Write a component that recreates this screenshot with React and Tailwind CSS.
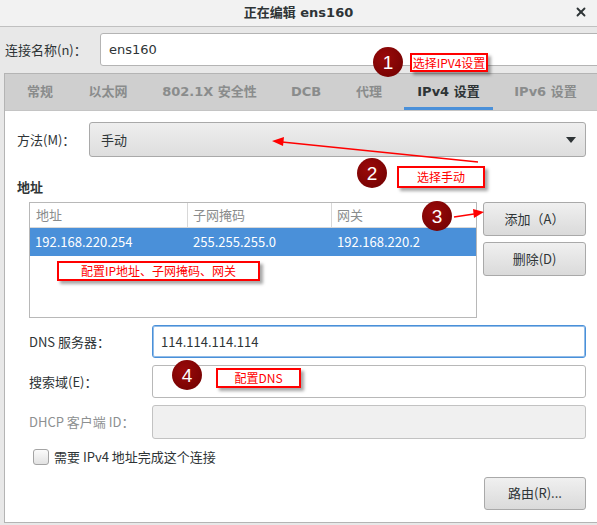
import { X } from 'lucide-react'

const ui = { fontFamily: '"Noto Sans CJK SC", "Noto Sans", sans-serif' }
const bold = { fontFamily: '"DejaVu Sans", "Noto Sans CJK SC", sans-serif' }

const tabs = [
  { label: '常规', w: 'w-[70px]' },
  { label: '以太网', w: 'w-[66px]' },
  { label: '802.1X 安全性', w: 'w-[137px]' },
  { label: 'DCB', w: 'w-[56px]' },
  { label: '代理', w: 'w-[70px]' },
  { label: 'IPv4 设置', w: 'w-[89px]', active: true },
  { label: 'IPv6 设置', w: 'w-[105px]' },
]

function Badge({ n, className }) {
  return (
    <div
      className={`absolute w-[30px] h-[30px] rounded-full flex items-center justify-center text-white text-[19px] leading-none bg-[radial-gradient(circle_at_40%_35%,#9a0a0a,#6e0000)] ${className}`}
      style={{ fontFamily: '"Liberation Sans", Arial, sans-serif' }}
    >
      {n}
    </div>
  )
}

function Note({ children, className }) {
  return (
    <div
      className={`absolute bg-white border-2 border-[#ff0000] text-[#ff0000] text-[12px] leading-none flex items-center justify-center shadow-[3px_3px_3px_rgba(0,0,0,0.35)] ${className}`}
      style={ui}
    >
      {children}
    </div>
  )
}

function Btn({ children, className = '' }) {
  return (
    <div className={`flex items-center justify-center rounded-[3px] border border-[#a9a9a9] bg-gradient-to-b from-[#f0f0f0] to-[#dadada] text-[13px] text-[#2e3436] ${className}`}>
      {children}
    </div>
  )
}

function Field({ label, children, dim }) {
  return (
    <div className="flex items-center pl-[12px] mt-[7px]">
      <div className={`w-[123px] text-[13px] ${dim ? 'text-[#8d9091]' : 'text-[#2e3436]'}`}>{label}</div>
      {children}
    </div>
  )
}

export default function App() {
  return (
    <div className="relative w-[597px] h-[525px] overflow-hidden bg-[#e8e8e8]" style={ui}>
      {/* title bar */}
      <div className="relative h-[27px] bg-[#f2f2f2] border-b border-[#c0c0c0] flex items-center justify-center">
        <span className="text-[13px] font-bold text-[#2e3436]" style={bold}>正在编辑 ens160</span>
        <X className="absolute right-[9px] top-[5px] w-[14px] h-[14px] text-[#2e3436]" strokeWidth={3.2} />
      </div>

      {/* connection name */}
      <div className="flex items-center pt-[6px]">
        <div className="w-[100px] pl-[5px] text-[13px] text-[#2e3436]">连接名称(n)：</div>
        <div className="flex-1 mr-[-6px] h-[33px] bg-white border border-[#b4b4b4] rounded-[3px] flex items-center pl-[8px] text-[13px] text-[#2e3436]" style={bold}>
          ens160
        </div>
      </div>

      {/* notebook */}
      <div className="mt-[7px] ml-[4px] border-l border-b border-[#b4b4b4]">
        <div className="h-[37px] bg-[#cfcfcf] border-t border-[#b4b4b4] flex">
          {tabs.map(t => (
            <div
              key={t.label}
              className={`${t.w} shrink-0 flex items-center justify-center text-[13px] font-bold ${t.active ? 'text-[#2e3436] border-b-[3px] border-[#4a90d9] pt-[3px]' : 'text-[#8a8c8c]'}`}
              style={bold}
            >
              {t.label}
            </div>
          ))}
        </div>

        <div className="h-[412px] bg-white border-t border-[#c4c4c4] pl-[12px] pr-[11px] pt-[11px] flex flex-col">
          <div className="flex items-center">
            <div className="w-[72px] text-[13px] text-[#2e3436]">方法(M)：</div>
            <div className="flex-1 h-[35px] rounded-[3px] border border-[#a9a9a9] bg-gradient-to-b from-[#eeeeee] to-[#dedede] flex items-center justify-between pl-[11px] pr-[9px] text-[13px] text-[#2e3436]">
              <span>手动</span>
              <svg width="10" height="6" viewBox="0 0 10 6"><polygon points="0,0 10,0 5,6" fill="#2e3436" /></svg>
            </div>
          </div>

          <div className="mt-[19px] h-[22px] flex items-center text-[13px] font-bold text-[#2e3436]">地址</div>

          <div className="mt-[4px] flex pl-[12px]">
            <div className="w-[448px] h-[116px] border border-[#b8b8b8] bg-white flex flex-col text-[13px]">
              <div className="h-[25px] flex border-b border-[#d8d8d8] text-[#8a8c8c]">
                <div className="w-[158px] pl-[6px] flex items-center border-r border-[#d8d8d8]">地址</div>
                <div className="w-[144px] pl-[5px] flex items-center border-r border-[#d8d8d8]">子网掩码</div>
                <div className="flex-1 pl-[5px] flex items-center">网关</div>
              </div>
              <div className="h-[28px] flex bg-[#4a90d9] text-white">
                <div className="w-[158px] pl-[5px] flex items-center">192.168.220.254</div>
                <div className="w-[144px] pl-[5px] flex items-center">255.255.255.0</div>
                <div className="flex-1 pl-[5px] flex items-center">192.168.220.2</div>
              </div>
            </div>
            <div className="ml-[6px] w-[103px] flex flex-col gap-[6px]">
              <Btn className="h-[34px]">添加（A）</Btn>
              <Btn className="h-[34px]">删除(D)</Btn>
            </div>
          </div>

          <Field label="DNS 服务器：">
            <div className="flex-1 h-[33px] rounded-[3px] border border-[#4a90d9] shadow-[inset_0_0_0_1px_rgba(74,144,217,0.6)] flex items-center pl-[8px] text-[13px] text-[#2e3436]">
              114.114.114.114
            </div>
          </Field>
          <Field label="搜索域(E)：">
            <div className="flex-1 h-[33px] rounded-[3px] border border-[#b8b8b8] bg-white" />
          </Field>
          <Field label="DHCP 客户端 ID：" dim>
            <div className="flex-1 h-[34px] rounded-[3px] border border-[#c2c2c2] bg-[#f0f0f0]" />
          </Field>

          <div className="mt-[8px] pl-[16px] flex items-center">
            <div className="w-[16px] h-[16px] rounded-[3px] border border-[#a4a4a4] bg-gradient-to-b from-[#fbfbfb] to-[#e2e2e2]" />
            <span className="ml-[5px] text-[13px] text-[#2e3436]">需要 IPv4 地址完成这个连接</span>
          </div>

          <Btn className="mt-[10px] self-end w-[102px] h-[33px]">路由(R)...</Btn>
        </div>
      </div>

      {/* annotations */}
      <svg className="absolute inset-0 pointer-events-none" width="597" height="525">
        <line x1="478" y1="162" x2="282" y2="142" stroke="#ff0000" strokeWidth="1.5" />
        <polygon points="272,141 284,137 283,146" fill="#ff0000" />
        <line x1="454" y1="217" x2="474" y2="214" stroke="#ff0000" strokeWidth="1.5" />
        <polygon points="484,212 473,209 474,218" fill="#ff0000" />
      </svg>

      <Badge n="1" className="left-[373px] top-[47px]" />
      <Note className="left-[410px] top-[53px] w-[78px] h-[19px]">选择IPV4设置</Note>

      <Badge n="2" className="left-[357px] top-[158px]" />
      <Note className="left-[397px] top-[166px] w-[88px] h-[22px]">选择手动</Note>

      <Badge n="3" className="left-[422px] top-[201px]" />
      <Note className="left-[57px] top-[261px] w-[203px] h-[20px]">配置IP地址、子网掩码、网关</Note>

      <Badge n="4" className="left-[172px] top-[360px]" />
      <Note className="left-[216px] top-[368px] w-[85px] h-[20px]">配置DNS</Note>
    </div>
  )
}
